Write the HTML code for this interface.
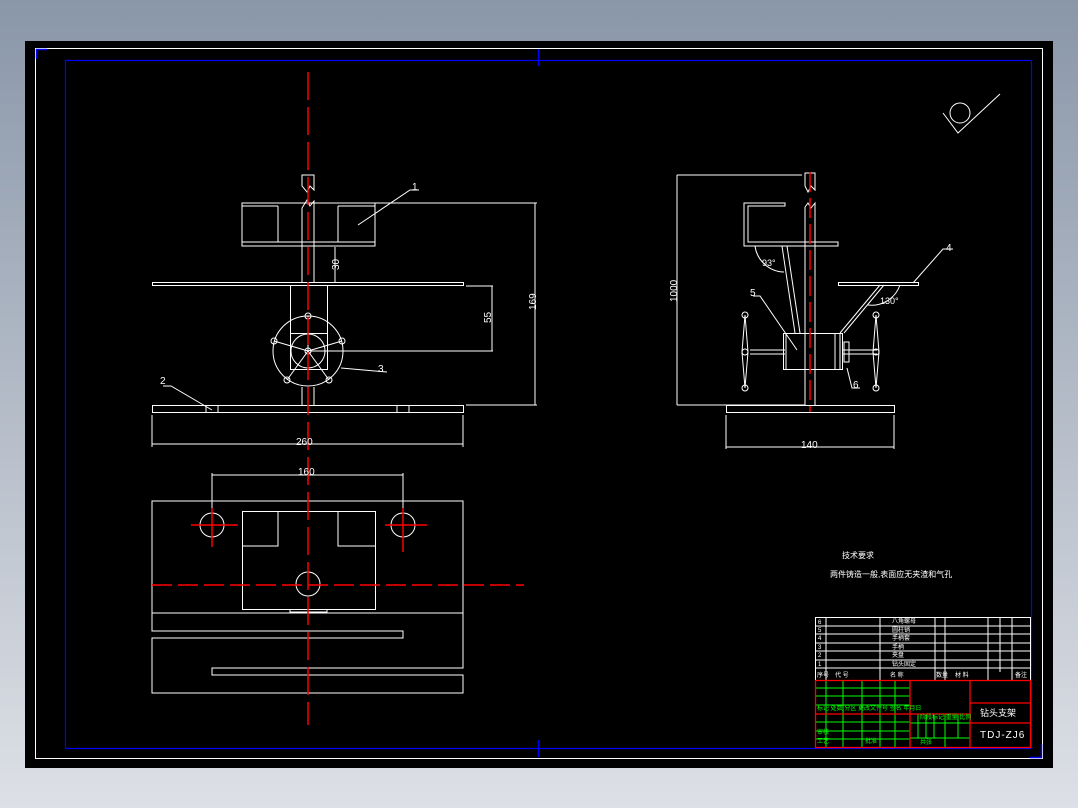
<!DOCTYPE html>
<html><head><meta charset="utf-8"><style>
html,body{margin:0;padding:0;width:1078px;height:808px;overflow:hidden;background:linear-gradient(#8a97a9,#dde0e6);}
svg{position:absolute;left:0;top:0}
text{font-family:"Liberation Sans","Noto Sans CJK SC",sans-serif;fill:#fff}
</style></head><body>
<svg width="1078" height="808" viewBox="0 0 1078 808">
<rect x="25" y="41" width="1028" height="727" fill="#000"/>
<rect x="35.5" y="48.5" width="1007" height="710" fill="none" stroke="#fff" stroke-width="1"/>
<rect x="65.5" y="60.5" width="966" height="688" fill="none" stroke="#00f" stroke-width="1.2"/>
<path d="M36.5 59V49.5H47M538.5 49V66M538.5 740V757M1041.5 744V757.5H1030" stroke="#00f" stroke-width="1.5" fill="none"/>
<g stroke="#fff" stroke-width="1" fill="none">
<!-- front view -->
<path d="M302 175H314V190L310 186L307 192L302 186Z"/>
<path d="M302 208L307 200L310 206L314 201V246M302 208V246"/>
<rect x="242" y="203" width="133" height="43"/>
<path d="M242 206H278M338 206H375M278 206V242M338 206V242M242 242H375"/>
<path d="M302 246V282M314 246V282"/>
<path d="M335 247V282"/>
<rect x="152.5" y="282.5" width="311" height="3"/>
<rect x="290.5" y="285.5" width="37" height="84"/>
<rect x="290.5" y="333.5" width="37" height="36"/>
<circle cx="308" cy="351" r="35"/>
<circle cx="308" cy="351" r="17"/>
<g>
<circle cx="308" cy="316" r="3"/><circle cx="274" cy="341" r="3"/><circle cx="342" cy="341" r="3"/><circle cx="287" cy="380" r="3"/><circle cx="329" cy="380" r="3"/><circle cx="308" cy="351" r="3"/>
</g>
<path d="M308 351L308 316M308 351L274 341M308 351L342 341M308 351L287 380M308 351L329 380"/>
<path d="M302 387V405M314 387V405"/>
<rect x="152.5" y="405.5" width="311" height="7"/>
<path d="M206 405V412M218 405V412M397 405V412M409 405V412"/>
<path d="M466 286H493M310 351H493M492 286V351"/>
<path d="M375 203H537M466 405H537M535 203V405"/>
<path d="M152 415V447M463 415V447M152 444H463"/>
<path d="M358 225L410 190H419M341 368L387 372M163 386H171L212 410"/>
<!-- side view -->
<path d="M805 173H815V190L811 186L808 192L805 186Z"/>
<path d="M805 207L808 203L811 208L815 203V405M805 207V405"/>
<path d="M785 203H744V246H838V242H748V206H785Z"/>
<path d="M782 246L795 333M787 246L800 333"/>
<rect x="783.5" y="333.5" width="59" height="36"/>
<path d="M786 333V369M835 333V369M840 333V369"/>
<path d="M840 333L880 285M844 333L884 285"/>
<rect x="838.5" y="282.5" width="80" height="3"/>
<path d="M750 350H785M750 354H785M842 350H877M842 354H877"/>
<rect x="844" y="342" width="5" height="20"/>
<circle cx="745" cy="315" r="3"/><circle cx="745" cy="352" r="3"/><circle cx="745" cy="388" r="3"/>
<circle cx="876" cy="315" r="3"/><circle cx="876" cy="352" r="3"/><circle cx="876" cy="388" r="3"/>
<path d="M745 315L742 352L745 388M745 315L748 352L745 388M876 315L873 352L876 388M876 315L879 352L876 388"/>
<path d="M677 175H802M677 405H805M677 175V405"/>
<rect x="726.5" y="405.5" width="168" height="7"/>
<path d="M726 415V449M894 415V449M726 447H894"/>
<path d="M755 246A30 30 0 0 0 784 272M900 285A30 30 0 0 1 868 305"/>
<path d="M913 283L943 249H953M753 296H760L797 350M847 368L852 388H860"/>
<!-- top view -->
<path d="M152 501H463V613H152Z"/>
<path d="M152 613V631H403V638H152V693H463V675H212V668H463V613"/>
<rect x="242.5" y="511.5" width="133" height="98"/>
<path d="M242 546H278V511M375 546H338V511M290 609V612H327V609"/>
<circle cx="212" cy="525" r="12"/><circle cx="403" cy="525" r="12"/><circle cx="308" cy="584" r="12"/>
<path d="M212 475H403M212 473V512M403 473V512"/>
<!-- roughness -->
<circle cx="960" cy="113" r="10"/>
<path d="M943 113L958 133L1000 94"/>
</g>
<g stroke="#f00" stroke-width="1.5" fill="none">
<path d="M308 72V725" stroke-dasharray="28 7"/>
<path d="M810 172V412" stroke-dasharray="20 6"/>
<path d="M152 585H524" stroke-dasharray="20 6"/>
<path d="M191 525H238M212 508V547M385 525H427M403 508V552"/>
</g>
<g font-size="10">
<text x="412" y="190">1</text><text x="160" y="384">2</text><text x="378" y="372">3</text>
<text x="946" y="251">4</text><text x="750" y="296">5</text><text x="853" y="388">6</text>
<text x="296" y="445">260</text><text x="801" y="448">140</text><text x="298" y="475">160</text>
<text x="339" y="270" transform="rotate(-90 339 270)">30</text>
<text x="491" y="323" transform="rotate(-90 491 323)">55</text>
<text x="536" y="310" transform="rotate(-90 536 310)">169</text>
<text x="677" y="302" transform="rotate(-90 677 302)">1000</text>
<text x="762" y="266" font-size="9">93°</text><text x="880" y="304" font-size="9">130°</text>
</g>
<text x="842" y="558" font-size="8">技术要求</text>
<text x="830" y="577" font-size="8">两件铸造一般,表面应无夹渣和气孔</text>
<!-- title block -->
<g stroke="#fff" stroke-width="1" fill="none">
<rect x="815.5" y="617.5" width="215" height="63"/>
<path d="M815 626H1030M815 634H1030M815 643H1030M815 651H1030M815 660H1030M815 668H1030"/>
<path d="M826 617V680M880 617V680M935 617V680M945 617V680M988 617V680M1000 617V672M1012 617V680"/>
</g>
<g stroke="#0f0" stroke-width="1" fill="none">
<path d="M815 688H910M815 696H910M815 705H910M815 714H910M815 722H910M815 731H910M815 739H910"/>
<path d="M826 680V747M843 680V747M862 680V747M880 680V747M895 680V747M910 680V747"/>
<path d="M910 723H970M910 738H970M918 714V738M926 714V738M934 714V738M945 714V747M958 714V738"/>
</g>
<g stroke="#f00" stroke-width="1.3" fill="none">
<rect x="815.5" y="680.5" width="215" height="67"/>
<path d="M910 680V747M970 680V747M970 703H1030M970 723H1030M815 714H970"/>
</g>
<g font-size="6">
<text x="818" y="624">6</text><text x="818" y="632">5</text><text x="818" y="640">4</text><text x="818" y="649">3</text><text x="818" y="657">2</text><text x="818" y="666">1</text>
<text x="892" y="623">八角螺母</text><text x="892" y="632">圆柱销</text><text x="892" y="640">手柄套</text><text x="892" y="649">手柄</text><text x="892" y="657">夹盘</text><text x="892" y="666">钻头固定</text>
<text x="817" y="677">序号</text><text x="835" y="677">代 号</text><text x="890" y="677">名 称</text><text x="936" y="677">数量</text><text x="955" y="677">材 料</text><text x="1015" y="677">备注</text>
</g>
<g font-size="6" fill="#0f0" style="fill:#0f0">
<text x="817" y="710" style="fill:#0f0">标记 处数 分区 更改文件号 签名 年月日</text>
<text x="817" y="734" style="fill:#0f0">审核</text><text x="817" y="743" style="fill:#0f0">工艺</text><text x="865" y="743" style="fill:#0f0">批准</text>
<text x="920" y="719" style="fill:#0f0">阶段标记 重量 比例</text><text x="920" y="744" style="fill:#0f0">共张</text>
</g>
<text x="980" y="716" font-size="9">钻头支架</text>
<text x="980" y="738" font-size="10" letter-spacing="1">TDJ-ZJ6</text>
</svg>
</body></html>
